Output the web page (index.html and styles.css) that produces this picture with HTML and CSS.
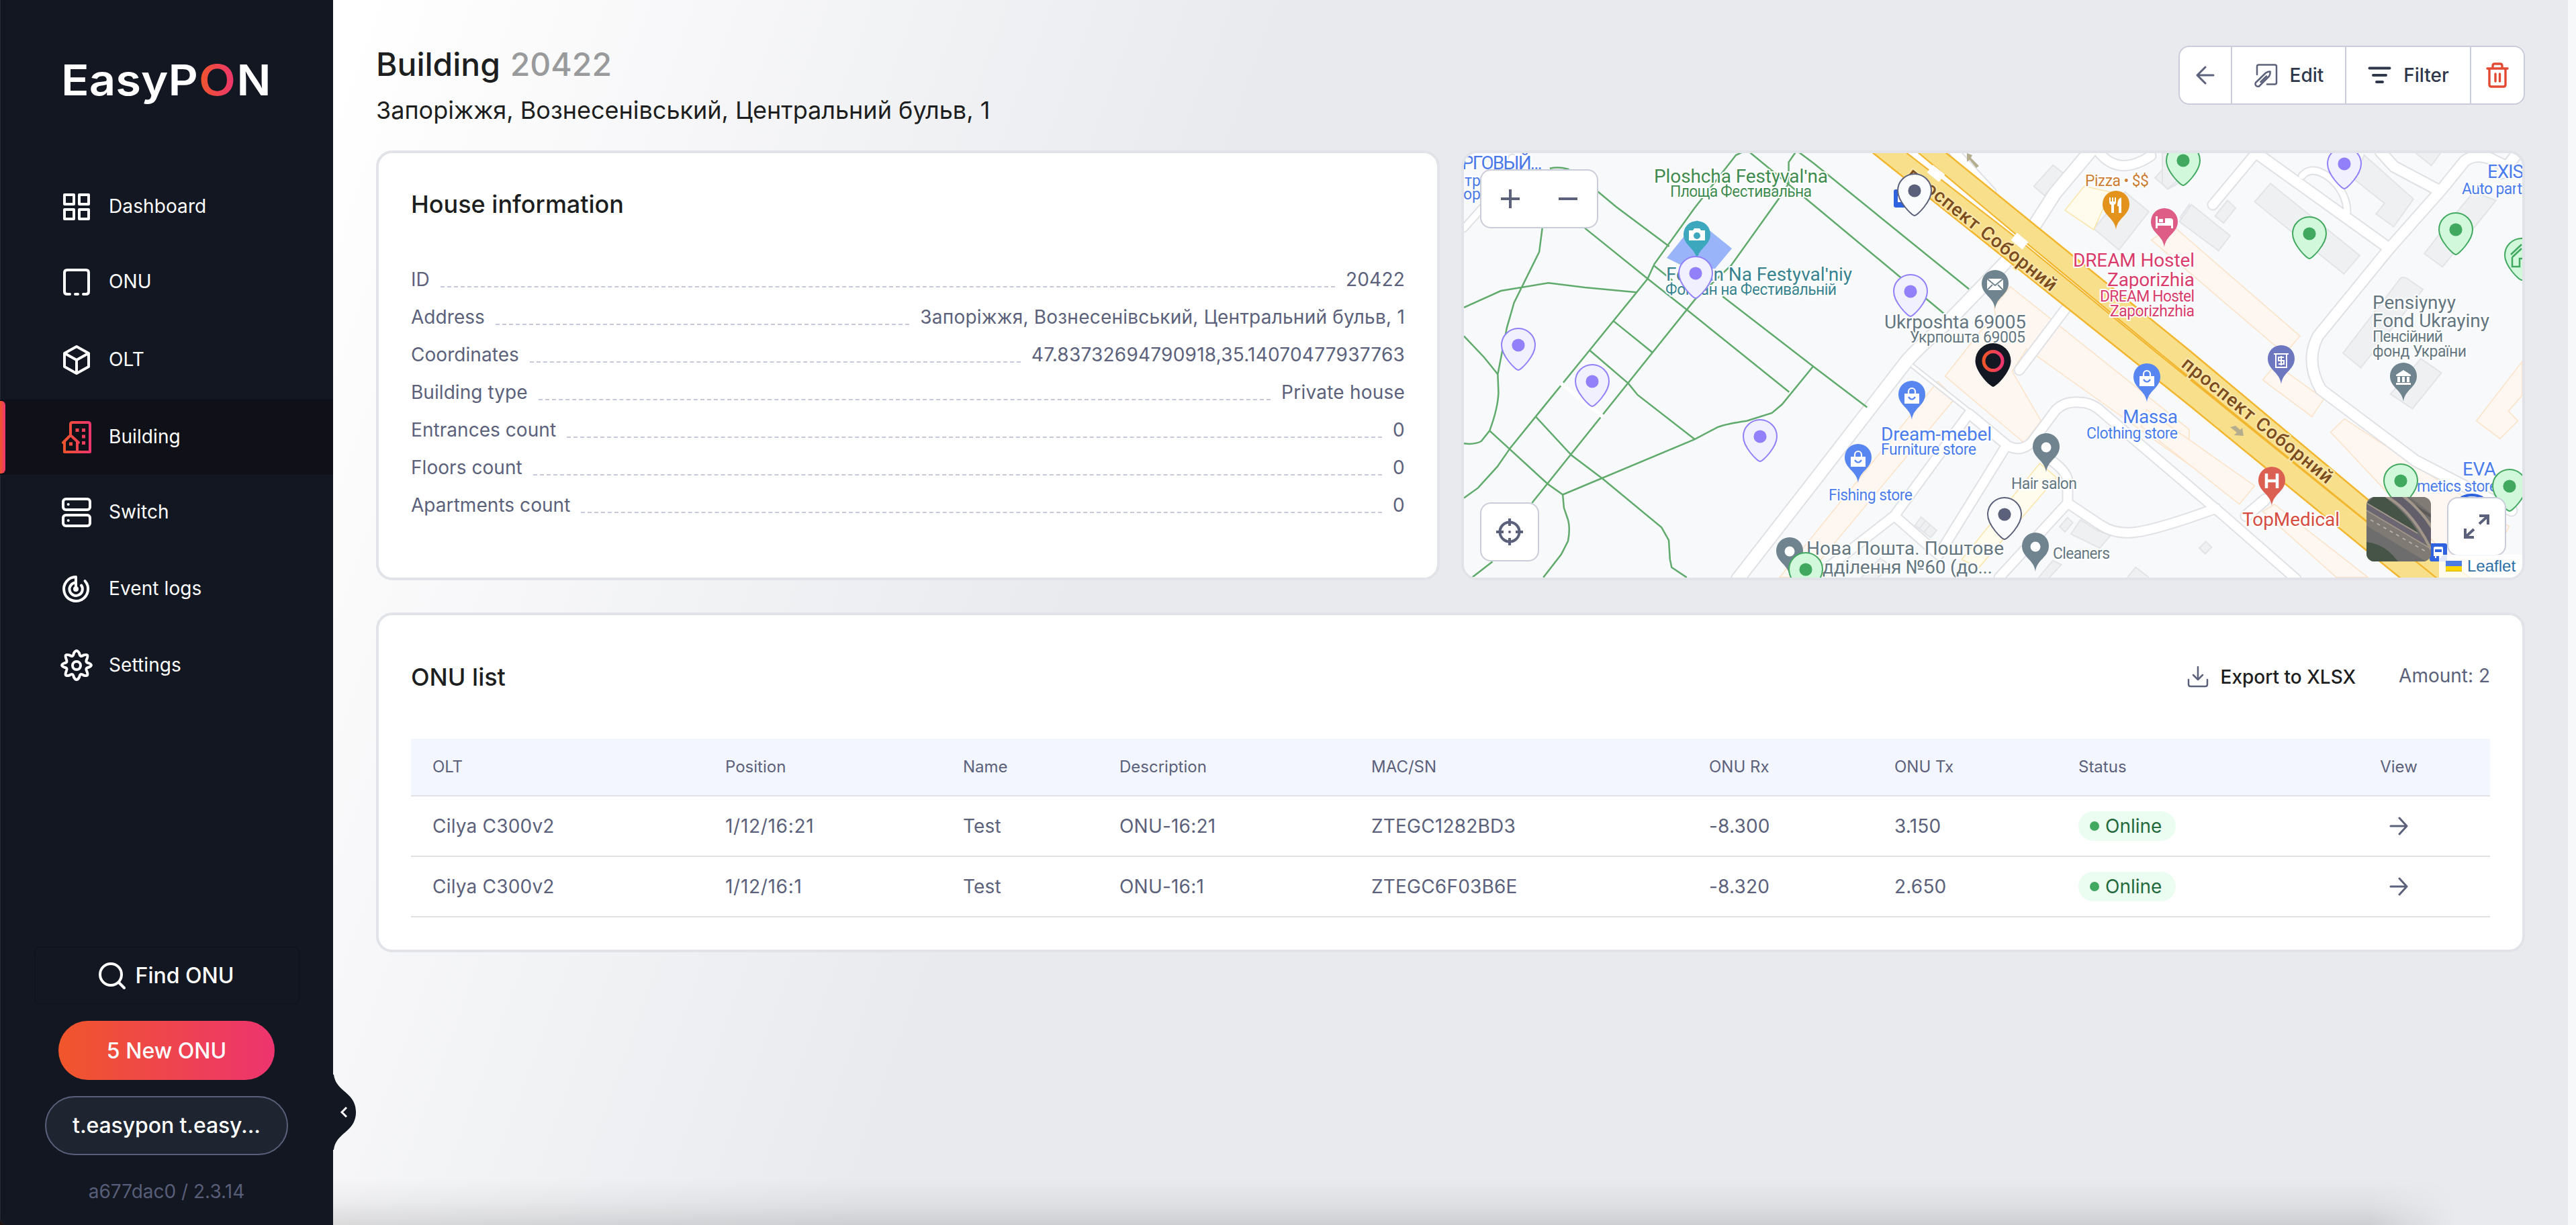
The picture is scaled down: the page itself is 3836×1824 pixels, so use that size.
FILE: index.html
```html
<!DOCTYPE html>
<html lang="en">
<head>
<meta charset="utf-8">
<title>EasyPON – Building 20422</title>
<link rel="stylesheet" href="styles.css">
</head>
<body>
<svg class="defs" width="0" height="0" aria-hidden="true">
  <defs>
    <linearGradient id="brand" x1="0" x2="1" y1="0" y2="0"><stop offset="0" stop-color="#f0562b"/><stop offset="1" stop-color="#ed346f"/></linearGradient>
    <linearGradient id="brandIcon" gradientUnits="userSpaceOnUse" x1="0" x2="44" y1="0" y2="0"><stop offset="0" stop-color="#f0562b"/><stop offset="1" stop-color="#ed346f"/></linearGradient>
    <symbol id="arrow-right" viewBox="0 0 28 28"><path d="M2 14H26M15 2l11 12-11 12" fill="none" stroke="currentColor" stroke-width="3" stroke-linecap="round" stroke-linejoin="round"/></symbol>
    <symbol id="pin" viewBox="-28 -65 56 67" overflow="visible"><path d="M0 0C-4 0-25-21-25-37A25 25 0 0 1 25-37C25-21 4 0 0 0z"/><circle class="dot" cy="-37" r="9.6"/></symbol>
  </defs>
</svg>
<div class="app">
  <aside class="sidebar">
    <svg class="logo" width="310" height="80" viewBox="92 84 310 80">
      <text x="91" y="142" textLength="204" lengthAdjust="spacingAndGlyphs">EasyP</text>
      <text x="296" y="142" textLength="55" lengthAdjust="spacingAndGlyphs" fill="url(#brand)">O</text>
      <text x="352.500" y="142" textLength="51" lengthAdjust="spacingAndGlyphs">N</text>
    </svg>
    <nav class="nav">
      <a class="nav-item"><svg width="48" height="48" viewBox="0 0 48 48"><g fill="none" stroke="#fff" stroke-width="4" stroke-linejoin="round"><path d="M6 6h14v14H6zM28 6h14v14H28zM6 28h14v14H6zM28 28h14v14H28z"/></g></svg><span>Dashboard</span></a>
      <a class="nav-item"><svg width="48" height="48" viewBox="0 0 48 48"><path d="M14 42h-4q-4 0-4-4V10q0-4 4-4h28q4 0 4 4v28q0 4-4 4h-4M22 42h4" fill="none" stroke="#fff" stroke-width="4" stroke-linecap="round"/></svg><span>ONU</span></a>
      <a class="nav-item tall"><svg width="48" height="48" viewBox="0 0 48 48"><path d="M24 4l18 10v20L24 44 6 34V14zM7 14.500L24 24l17-9.500M24 24v19" fill="none" stroke="#fff" stroke-width="4" stroke-linejoin="round"/></svg><span>OLT</span></a>
      <a class="nav-item active"><svg width="48" height="48" viewBox="0 0 48 48"><g transform="translate(2 0)"><path d="M13 19V5q0-3 3-3h23q3 0 3 3v41H4V31M2 32L13 21l12 11M23 31v14" fill="none" stroke="url(#brandIcon)" stroke-width="4" stroke-linejoin="round" stroke-linecap="round"/><path d="M20.500 11h5v5h-5zM30 11h5v5h-5zM30 20.500h5v5h-5zM30 30h5v5h-5zM11 31.500h5v5h-5z" fill="url(#brandIcon)"/></g></svg><span>Building</span></a>
      <a class="nav-item"><svg width="48" height="48" viewBox="0 0 48 48"><g fill="none" stroke="#fff" stroke-width="4"><rect x="4" y="4" width="40" height="16" rx="4"/><rect x="4" y="28" width="40" height="16" rx="4"/></g><circle cx="11.700" cy="12" r="2" fill="#fff"/><circle cx="11.700" cy="36" r="2" fill="#fff"/></svg><span>Switch</span></a>
      <a class="nav-item mid"><svg width="48" height="48" viewBox="0 0 48 48"><g fill="none" stroke="#fff" stroke-width="4" stroke-linecap="round" stroke-linejoin="round"><path d="M23 24V6A18 18 0 1 0 36.500 12M23 14.500a9.700 9.700 0 1 0 8 4"/></g><circle cx="23" cy="24" r="4" fill="#fff"/></svg><span>Event logs</span></a>
      <a class="nav-item"><svg width="48" height="48" viewBox="0 0 48 48"><g fill="none" stroke="#fff" stroke-width="4" stroke-linejoin="round"><path d="M20 5.500q4-7 8 0c1 5 3 5.500 6.500 3 6-1.500 7 0 5 5.500-2 4-1.500 5.500 3 6.500 4.500 2 4.500 4 0 6-4.500 1-5 2.500-3 6.500 2 5.500 1 7-5 5.500-3.500-2.500-5.500-2-6.500 3q-4 7-8 0c-1-5-3-5.500-6.500-3-6 1.500-7 0-5-5.500 2-4 1.500-5.500-3-6.500-4.500-2-4.500-4 0-6 4.500-1 5-2.500 3-6.500-2-5.500-1-7 5-5.500C17 11 19 10.500 20 5.500z"/><circle cx="24" cy="24" r="6"/></g></svg><span>Settings</span></a>
    </nav>
    <div class="side-foot">
      <div class="find"><svg width="44" height="44" viewBox="0 0 44 44"><g fill="none" stroke="#fff" stroke-width="4" stroke-linecap="round"><circle cx="20" cy="20" r="16"/><path d="M32 32l8 8"/></g></svg>Find ONU</div>
      <div class="new-onu">5 New ONU</div>
      <div class="user">t.easypon t.easy...</div>
      <div class="version">a677dac0 / 2.3.14</div>
    </div>
    <svg class="toggle" width="36" height="112" viewBox="0 0 36 112"><path d="M0 0H2C5 26 35 26 35 56S5 86 2 112H0z" fill="#131722"/><path d="M21 49l-7 7 7 7" fill="none" stroke="#fff" stroke-width="3"/></svg>
  </aside>

  <main class="main">
    <header class="head">
      <div>
        <h1>Building <span>20422</span></h1>
        <p class="sub">Запоріжжя, Вознесенівський, Центральний бульв, 1</p>
      </div>
      <div class="actions">
        <button class="btn back"><svg width="28" height="28" viewBox="0 0 28 28"><path d="M26 14H2M14 2L2 14l12 12" fill="none" stroke="#5b617a" stroke-width="3" stroke-linecap="round" stroke-linejoin="round"/></svg></button>
        <button class="btn edit"><svg width="36" height="36" viewBox="0 0 36 36"><g fill="none" stroke="#5b617a" stroke-width="2.500" stroke-linecap="round" stroke-linejoin="round"><path d="M5 17V5q0-2.500 2.500-2.500h24Q34 2.500 34 5v24q0 2.500-2.500 2.500H20"/><path d="M18 14.500q4-2.500 6.500-2 .5 4-1.500 7L8 34.500q-3 1-5-1.500-1-2 0-4z M19 19.500l-8.500 8.500"/></g></svg>Edit</button>
        <button class="btn filter"><svg width="36" height="36" viewBox="0 0 36 36"><path d="M3.500 7.500h30M9 18h19M14 28h9" fill="none" stroke="#2f374b" stroke-width="4" stroke-linecap="round"/></svg>Filter</button>
        <button class="btn del"><svg width="36" height="40" viewBox="0 0 36 40"><g fill="none" stroke="#e34a33" stroke-width="3.400" stroke-linecap="round" stroke-linejoin="round"><path d="M3 10h30M11 9V6q0-3 3-3h8q3 0 3 3v3M6 10v24q0 3 3 3h18q3 0 3-3V10M15 18v11M21.500 18v11"/></g></svg></button>
      </div>
    </header>

    <div class="cards">
      <section class="card info">
        <h2>House information</h2>
        <dl>
          <div><dt>ID</dt><i></i><dd>20422</dd></div>
          <div><dt>Address</dt><i></i><dd>Запоріжжя, Вознесенівський, Центральний бульв, 1</dd></div>
          <div><dt>Coordinates</dt><i></i><dd>47.83732694790918,35.14070477937763</dd></div>
          <div><dt>Building type</dt><i></i><dd>Private house</dd></div>
          <div><dt>Entrances count</dt><i></i><dd>0</dd></div>
          <div><dt>Floors count</dt><i></i><dd>0</dd></div>
          <div><dt>Apartments count</dt><i></i><dd>0</dd></div>
        </dl>
      </section>

      <section class="card map">
        <svg class="canvas" width="1576" height="632" viewBox="2180 228 1576 632">
          <rect x="2180" y="228" width="1576" height="632" fill="#f7f9fb"/>
          <!-- building footprints -->
          <g transform="translate(2700 210) scale(.35714 .42088)" class="grey">
            <path d="M920 160l80-75 45 30-80 78zM1170 310l130-130 100 70-125 135zM1425 130l55-50 88 40-55 35-33 15zM425 1360l25-30 65 48-25 25zM442 1372l25-27M462 1385l25-27M1028 1365l32-33 23 18-33 33zM1075 1390l40-50 70 38 55 17-45 45zM1310 1544l35-36 55 36M1530 270l38-45v75zM200 1544l80-68 50 30-60 38M940 1544l60-60 35 15-50 45"/>
          </g>
          <g transform="translate(3220 210) scale(.39286 .42088)" class="grey">
            <path d="M350 215l60-65 338 255-60 65zM65 285l45-60 147 110-44 53zM200 265l47-55 31 27-46 53zM735 120l30-70 187 155-75 98-67-45 32-38-142-105zM993 398l107-128 80-90 85 30-203 235zM685 750L895 495q10-18 30-10l63 40-236 277zM865 895l115-125 78 50-110 127zM140 1440l25-23 22 20-25 23zM960 42l60 45 35-45M0 150l20 20 50-40 20-88H0z"/>
          </g>
          <g transform="translate(2700 210) scale(.35714 .42088)" class="peach">
            <path d="M550 832l155-167 55-45-5-35 67-70 746 505v125L890 735l-60 80 120 175-70 78zM-80 1480L520 850l72 60L-30 1544h-110z"/>
            <path class="yel" d="M1050 245l80-85 110 20-70 134zM945 1140l70 50-325 320-70-30z"/>
          </g>
          <g transform="translate(3220 210) scale(.39286 .42088)" class="peach">
            <path d="M-42 350L40 300l482 390-42 45-20 15zM380 845l50-55 182 122-45 63zM638 1030l52-47 625 380-100 181h-60zM-80 1010l20-60 410 270-58 65zM380 1310l45-25 355 259H660zM1190 990l174-210v120l-52 55 36 35-68 63z"/>
          </g>
          <path d="M2527 328l52 42-25 30-40 0-32-16z" fill="#99b4f8"/>
          <!-- streets: wide casing first, then the same lines narrower in white -->
          <g class="streets">
            <g id="streets">
              <path class="w18" d="M2588 862L2700 718 2839 538Q2860 514 2900 480L2985 392 3028 338 3060 288 3112 226"/>
              <path class="w13" d="M3007 551l68-90M2821 768L2932 616l58 48q20 10 36-6l35-47q14-14 35-12 20 0 36 16L3220 690l94 80 105 92M2700 862l121-94 66 58 98-158M3079 749l48 32q20 14 48 12 25-2 85-22l40-14M3079 749l-102 111M3079 749v-32q0-14-25-32M3125 226q30 38 78 6M3295 305l60-72M2910 226l55 60"/>
              <path class="w5" d="M2848 545l82 65"/>
              <path class="w14" d="M3360 228L3558 370M3558 370L3452 500Q3432 538 3456 580L3597 686 3740 760M3558 370l78-88 34-42q16-12 38-4l40 20M3545 226l20 22 64 34M3725 258l32-40M3345 768l28-24"/>
              <path class="w9" d="M3428 262q15-18 43 4 24 22 24 50M2180 340l40-45 32-60"/>
            </g>
            <use href="#streets" class="surface"/>
          </g>
          <!-- avenue -->
          <path d="M2787 226L3260 603.500 3576 862H3680L3524.500 742.400 3260 521.500 2896 226z" fill="#f8df8c" stroke="#f2b62e" stroke-width="2.500"/>
          <path d="M2837 226L3005 356 3220 532 3630 862 3220 529 3008 354 2855 226z" fill="#fff" stroke="#f2b62e" stroke-width="2.200"/>
          <path d="M2875 252l16 13M2999 352l17 14M2874 251l18 14" stroke="#fff" stroke-width="14"/>
          <!-- park paths -->
          <g transform="translate(2160 210) scale(.35714 .42088)" class="paths">
            <path d="M56 589L210 530 408 502 560 518 776 535M384 300L370 392 265 572 235 660 197 825 200 890Q198 945 163 1025L128 1062Q100 1075 56 1070M56 690L140 765 197 825M163 1025L405 1213 468 1251 1018 1055 1115 1012Q1150 1000 1235 990L1340 962 1382 932 1512 797M468 1251L473 1298 490 1340Q500 1370 490 1415L462 1462 387 1544M56 1263L115 1227 195 1152 250 1085 355 975 580 740 822 487 850 435 1015 240 1190 50 1215 40M1245 38L1512 225 2057 610M1450 38L1512 77 2162 524M1440 38L1410 75V150L1368 205 1170 440 1020 560 340 1280M355 975L505 1112 635 1195 880 1367 910 1412 915 1480 922 1508 985 1544M680 637L845 750M580 740L742 858 780 898 1018 1055M560 308L822 487 990 600 1412 888M414 97Q450 90 490 99L612 177 690 232 912 373M850 442L925 493M1135 550L1512 797 1737 942M90 1544L175 1488"/>
            <path d="M460 857L635 975" class="bench"/>
          </g>
          <!-- street names -->
          <g class="ave">
            <text transform="translate(2838 263) rotate(38.500)" textLength="276">проспект Соборний</text>
            <text transform="translate(3247 545) rotate(39)" textLength="280">проспект Соборний</text>
          </g>
          <path d="M2929 228l8 3-2 4 12 12-4 3-10-12-4 3zM3321 636l8-2 7 6 3-3 2 12-14-1 4-4z" fill="#b4ad8e"/>
          <!-- transit stops -->
          <g><rect x="2820" y="282" width="27" height="27" rx="3" fill="#2f62de"/><rect x="3618" y="809" width="26" height="27" rx="3" fill="#2f62de"/><path d="M3624 816q0-2 2-2h10q2 0 2 2v12h-3v3h-2v-3h-5v3h-2v-3h-2zM2826 289h10v12h-10z" fill="#fff"/><path d="M3626 818h10v4h-10z" fill="#2f62de"/><path d="M3665 741q16-8 32 0" stroke="#2f62de" stroke-width="4" fill="none"/></g>
          <!-- places -->
          <g class="pl">
            <g fill="#4b7ae8"><text x="2177" y="252" textLength="120" class="big">РГОВЫЙ...</text><text x="2181" y="277">тра</text><text x="2179" y="297">opin</text></g>
            <g fill="#3f8b50"><text x="2463" y="272" class="big" textLength="259">Ploshcha Festyvalʹna</text><text x="2487" y="293" textLength="211">Площа Фестивальна</text></g>
            <g fill="#38838f"><text x="2481" y="418" class="big" textLength="277">Fontan Na Festyvalʹniy</text><text x="2480" y="439" textLength="255">Фонтан на Фестивальній</text></g>
            <g fill="#647680"><text x="2806" y="489" class="big" textLength="211">Ukrposhta 69005</text><text x="2844" y="510" textLength="172">Укрпошта 69005</text>
              <text x="2995" y="728" textLength="98">Hair salon</text><text x="3057" y="832" textLength="85">Cleaners</text>
              <text x="2690" y="826" class="big" textLength="294">Нова Пошта. Поштове</text><text x="2714" y="854" class="big" textLength="253">дділення №60 (до...</text>
              <text x="3533" y="460" class="big" textLength="124">Pensiynyy</text><text x="3533" y="487" class="big" textLength="174">Fond Ukrayiny</text><text x="3533" y="509" textLength="105">Пенсійний</text><text x="3533" y="531" textLength="140">фонд України</text></g>
            <g fill="#4a7cec"><text x="2801" y="656" class="big" textLength="165">Dream-mebel</text><text x="2801" y="677" textLength="142">Furniture store</text><text x="2723" y="745" textLength="125">Fishing store</text>
              <text x="3161" y="630" class="big" textLength="82">Massa</text><text x="3107" y="653" textLength="136">Clothing store</text>
              <text x="3704" y="265" class="big" textLength="54">EXIS</text><text x="3666" y="289" textLength="90">Auto part</text><text x="3667" y="708" class="big" textLength="50">EVA</text><text x="3599" y="732" textLength="120">metics store</text></g>
            <text x="3105" y="277" textLength="95" fill="#cc7d33">Pizza • $$</text>
            <g fill="#d83b6c"><text x="3087" y="397" class="big" textLength="181">DREAM Hostel</text><text x="3138" y="426" class="big" textLength="130">Zaporizhia</text><text x="3127" y="449" textLength="141">DREAM Hostel</text><text x="3142" y="471" textLength="126">Zaporizhzhia</text></g>
            <text x="3339" y="783" class="big" textLength="145" fill="#d54c40">TopMedical</text>
          </g>
          <g class="gp">
            <g transform="translate(2527 387)" fill="#3da7bd"><path d="M0 0C-2-18-20-21-20-38A20 20 0 0 1 20-38C20-21 2-18 0 0z"/><path d="M-12-44h6l2-3h8l2 3h6v15h-24z" fill="#fff"/><circle cy="-36" r="5" /></g>
            <g transform="translate(2971 460)" fill="#70848f"><path d="M0 0C-2-18-20-21-20-38A20 20 0 0 1 20-38C20-21 2-18 0 0z"/><path d="M-12-45h24v17h-24z" fill="#fff"/><path d="M-12-45L0-35l12-10M-12-28l8-8M12-28l-8-8" fill="none" stroke="#70848f" stroke-width="2"/></g>
            <g id="shop" transform="translate(2847 625)" fill="#5886f0"><path d="M0 0C-2-18-20-21-20-38A20 20 0 0 1 20-38C20-21 2-18 0 0z"/><path d="M-11-39h22v15h-22z" fill="#fff"/><path d="M-5-39v-3a5 5 0 0 1 10 0v3" fill="none" stroke="#fff" stroke-width="2.200"/><path d="M-5-34q5 7 10 0" fill="none" stroke="#5886f0" stroke-width="2.200"/></g>
            <use href="#shop" x="-80" y="94"/><use href="#shop" x="350" y="-26"/>
            <g id="plain" transform="translate(3047 703)" fill="#70848f"><path d="M0 0C-2-18-20-21-20-38A20 20 0 0 1 20-38C20-21 2-18 0 0z"/><circle cy="-37" r="7.500" fill="#fff"/></g>
            <use href="#plain" x="-16" y="148"/><use href="#plain" x="-382" y="155"/>
            <g transform="translate(3151 342)" fill="#e3921c"><path d="M0 0C-2-18-20-21-20-38A20 20 0 0 1 20-38C20-21 2-18 0 0z"/><path d="M-10-48v7q0 3 3 4v12h4v-12q3-1 3-4v-7h-2v6h-2v-6h-2v6h-2v-6zM8-48v23H4v-10H2q0-12 6-13z" fill="#fff"/></g>
            <g transform="translate(3223 368)" fill="#de5d86"><path d="M0 0C-2-18-20-21-20-38A20 20 0 0 1 20-38C20-21 2-18 0 0z"/><path d="M-13-46h3v10H1v-7h8q4 0 4 4v11h-3v-4h-20v4h-3zM-8-42h6v5h-6z" fill="#fff"/></g>
            <g transform="translate(3397 572)" fill="#6c77bf"><path d="M0 0C-2-18-20-21-20-38A20 20 0 0 1 20-38C20-21 2-18 0 0z"/><path d="M-11-45h22M-8-45v20H8v-20M4-40h-8v5h8v5h-8M0-42v14" fill="none" stroke="#fff" stroke-width="2"/></g>
            <g transform="translate(3579 598)" fill="#70848f"><path d="M0 0C-2-18-20-21-20-38A20 20 0 0 1 20-38C20-21 2-18 0 0z"/><path d="M-11-40L0-47l11 7v2h-22zM-9-37h4v8h-4zM-2-37h4v8h-4zM5-37h4v8H5zM-11-28h22v3h-22z" fill="#fff"/></g>
            <g transform="translate(3383 753)" fill="#dc6051"><path d="M0 0C-2-18-20-21-20-38A20 20 0 0 1 20-38C20-21 2-18 0 0z"/><path d="M-8-48v22M8-48v22M-8-37H8" fill="none" stroke="#fff" stroke-width="4.500"/></g>
          </g>
          <!-- building markers -->
          <g class="pin violet"><use href="#pin" x="2233" y="486" width="56" height="67"/><use href="#pin" x="2343" y="540" width="56" height="67"/><use href="#pin" x="2497" y="379" width="56" height="67"/><use href="#pin" x="2593" y="622" width="56" height="67"/><use href="#pin" x="2817" y="406" width="56" height="67"/><use href="#pin" x="3463" y="216" width="56" height="67"/></g>
          <g class="pin green"><use href="#pin" x="2661" y="820" width="56" height="67"/><use href="#pin" x="3223" y="211" width="56" height="67"/><use href="#pin" x="3411" y="320" width="56" height="67"/><use href="#pin" x="3629" y="314" width="56" height="67"/><use href="#pin" x="3547" y="688" width="56" height="67"/><use href="#pin" x="3709" y="696" width="56" height="67"/>
            <g transform="translate(3755 417)"><path d="M0 0C-4 0-25-21-25-37A25 25 0 0 1 25-37C25-21 4 0 0 0z"/><path d="M-16-38L0-53M-14-34L0-47M-14-34v14h11v-12h8" fill="none" stroke-width="2.500"/></g></g>
          <g class="pin white"><use href="#pin" x="2823" y="256" width="56" height="67"/><use href="#pin" x="2957" y="738" width="56" height="67"/></g>
          <g transform="translate(2968 576)"><path d="M0 0C-4 0-26.500-22-26.500-38.500A26.500 26.500 0 0 1 26.500-38.500C26.500-22 4 0 0 0z" fill="#131722"/><circle cy="-38.500" r="14" fill="none" stroke="url(#brand)" stroke-width="5"/></g>
        </svg>
        <div class="ctl zoom"><svg width="172" height="84" viewBox="0 0 172 84"><path d="M29 42h28M43 28v28M115 42h28" stroke="#5b617a" stroke-width="4"/></svg></div>
        <div class="ctl locate"><svg width="84" height="84" viewBox="0 0 84 84"><g fill="none" stroke="#5b617a" stroke-width="4"><circle cx="42" cy="42" r="14.500"/><path d="M42 22v11M42 51v11M22 42h11M51 42h11"/></g><circle cx="42" cy="42" r="2" fill="#5b617a"/></svg></div>
        <div class="layer"><svg width="96" height="96" viewBox="0 0 96 96"><rect width="96" height="96" fill="#706e6c"/><path d="M0 20L96 76V98H90L0 43z" fill="#7f7a74"/><path d="M0 43L92 98H0z" fill="#6d6d6d"/><path d="M62-2L98 26V-2z" fill="#807b75"/><path d="M58 4L98 30" stroke="#5c5959" stroke-width="4"/><path d="M0 10L10 0H27Q58 22 77 53L20 20z" fill="#465347"/><path d="M0 67Q28 70 47 96H0z" fill="#465347"/><path d="M40-2Q74 20 98 68" fill="none" stroke="#625e6a" stroke-width="15"/><path d="M0 14L86 66" stroke="#6b6672" stroke-width="7"/><path d="M0 9L76 54M0 20L94 76" stroke="#a2968b" stroke-width="1.800"/><path d="M28-2Q68 20 96 78M54-2Q80 18 98 46" fill="none" stroke="#a2968b" stroke-width="4"/><path d="M6 34L90 82" stroke="#b9b1a7" stroke-width="1.800" stroke-dasharray="5 6"/></svg></div>
        <div class="ctl full"><svg width="84" height="84" viewBox="0 0 84 84"><path d="M46 38L58 27M46 26h13v13M38 46L26 57M25 45v13h13" fill="none" stroke="#5b617a" stroke-width="4"/></svg></div>
        <div class="attr"><svg width="24" height="16" viewBox="0 0 24 16"><path d="M0 0h24v8H0z" fill="#4c7be1"/><path d="M0 8h24v8H0z" fill="#ffd500"/><path d="M0 14.500h24V16H0z" fill="#e0bc00"/></svg>Leaflet</div>
      </section>
    </div>

    <section class="card list">
      <div class="list-head">
        <h2>ONU list</h2>
        <div class="export"><svg width="32" height="32" viewBox="0 0 32 32"><path d="M2 20v7q0 3 3 3h22q3 0 3-3v-7M16 1v19M9 13l7 7 7-7" fill="none" stroke="#5b617a" stroke-width="2.500" stroke-linecap="round" stroke-linejoin="round"/></svg>Export to XLSX</div>
        <div class="amount">Amount: 2</div>
      </div>
      <div class="table">
        <div class="tr th"><span>OLT</span><span>Position</span><span>Name</span><span>Description</span><span>MAC/SN</span><span>ONU Rx</span><span>ONU Tx</span><span>Status</span><span>View</span></div>
        <div class="tr"><span>Cilya C300v2</span><span class="pos">1/12/16:21</span><span>Test</span><span>ONU-16:21</span><span>ZTEGC1282BD3</span><span>-8.300</span><span>3.150</span><span><b class="pill">Online</b></span><span><svg width="28" height="28"><use href="#arrow-right"/></svg></span></div>
        <div class="tr"><span>Cilya C300v2</span><span class="pos">1/12/16:1</span><span>Test</span><span>ONU-16:1</span><span>ZTEGC6F03B6E</span><span>-8.320</span><span>2.650</span><span><b class="pill">Online</b></span><span><svg width="28" height="28"><use href="#arrow-right"/></svg></span></div>
      </div>
    </section>
  </main>
  <div class="scrollbar"></div>
</div>
</body>
</html>
```
FILE: styles.css
```css
* { box-sizing: border-box; }
html, body { margin: 0; height: 100%; }
body { font-family: Inter, "Liberation Sans", sans-serif; font-size: 28px; color: #1d1e20; overflow: hidden; }
h1, h2, p, dl, dd { margin: 0; }
svg { display: block; flex: none; }
.defs { position: absolute; }

.app { display: flex; height: 1824px; background: #1d140f; }

/* sidebar */
.sidebar { position: relative; flex: none; width: 496px; height: 1824px; display: flex; flex-direction: column; background: #131722; color: #fff; box-shadow: inset 1px 0 #272b35; border-radius: 0 0 0 10px; }
.logo { margin: 84px 0 0 92px; font-size: 63px; font-weight: 600; fill: #fff; overflow: visible; }
.nav { margin-top: 88px; }
.nav-item { display: flex; align-items: center; gap: 24px; height: 112px; padding-left: 90px; letter-spacing: .1px; }
.nav-item span { padding-bottom: 2px; }
.nav-item.tall { height: 119px; }
.nav-item.mid { height: 116px; }
.nav-item.active { position: relative; background: #101018; }
.nav-item.active::before { content: ""; position: absolute; left: 0; top: 2px; width: 8px; height: 108px; border-radius: 0 6px 6px 0; background: linear-gradient(90deg, #f0562b, #ed346f); }
.side-foot { margin-top: auto; display: flex; flex-direction: column; align-items: center; gap: 24px; height: 415px; font-size: 32px; font-weight: 500; }
.find { display: flex; align-items: center; justify-content: center; gap: 13px; width: 395px; height: 87px; padding-right: 3px; border: 2px solid #11141e; border-radius: 8px; }
.new-onu { width: 322px; height: 88px; border-radius: 44px; line-height: 89px; text-align: center; background: linear-gradient(90deg, #f0562b, #ed346f); }
.user { width: 362px; height: 88px; border: 2px solid #5b617a; border-radius: 44px; line-height: 84px; text-align: center; letter-spacing: -.1px; background: #1e2531; }
.version { margin-top: 12px; font-size: 28px; font-weight: 400; line-height: 36px; color: #585e77; }
.toggle { position: absolute; left: 495px; top: 1600px; z-index: 2; }

/* page */
.main { position: relative; flex: none; width: 3328px; padding: 68px 64px 0; display: flex; flex-direction: column; background: linear-gradient(110deg, #fff 1%, #e9eaee 36%); }
.main::after { content: ""; position: absolute; left: 0; width: 3160px; bottom: 0; height: 70px; background: linear-gradient(180deg, rgba(0,0,0,0), rgba(0,0,0,.035) 50%, rgba(0,0,0,.115)); mask-image: linear-gradient(90deg, #000 96%, transparent); }
.scrollbar { flex: 1; background: #f7f8fa; }
.head { display: flex; justify-content: space-between; height: 156px; }
h1 { font-size: 48px; font-weight: 500; line-height: 56px; }
h1 span { color: #999a9c; margin-left: 2px; }
.sub { margin-top: 18px; font-size: 36px; line-height: 44px; }
.actions { display: flex; height: 88px; border: 2px solid #c9cdd9; border-radius: 16px; background: #fff; overflow: hidden; }
.btn { display: flex; align-items: center; justify-content: center; gap: 18px; padding: 0; border: 0; border-right: 2px solid #c9cdd9; background: none; font: 500 28px Inter, sans-serif; color: #2f374b; }
.back { width: 78px; }
.edit { width: 170px; }
.filter { width: 186px; }
.del { width: 78px; border: 0; }

.cards { display: grid; grid-template-columns: 1584px 1584px; gap: 32px; height: 640px; }
.card { border: 4px solid #e2e3e9; border-radius: 24px; background: #fff; }
h2 { font-size: 36px; font-weight: 500; line-height: 44px; }
.info { padding: 54px 48px; }
dl { margin-top: 62px; color: #5b617a; }
dl div { display: flex; height: 56px; line-height: 56px; gap: 16px; letter-spacing: .05px; }
dl dd { letter-spacing: .22px; }
dl i { flex: 1; height: 40px; border-bottom: 2px dashed #c6cad8; }

.map { position: relative; overflow: hidden; }
.canvas { font-family: Roboto, sans-serif; }
.grey path { fill: #eff0f2; stroke: #e3e4e8; stroke-width: 2; vector-effect: non-scaling-stroke; }
.peach path { fill: #fef6f0; stroke: #fce2c6; stroke-width: 1.500px; vector-effect: non-scaling-stroke; }
.peach .yel { fill: #fffcee; stroke: #fbe4a8; }
.streets { --surface: #dfe1e5; --edge: 0px; }
.surface { --surface: #fff; --edge: 4px; }
.streets path { fill: none; stroke: var(--surface); stroke-width: calc(var(--w) - var(--edge)); stroke-linejoin: round; stroke-linecap: round; }
.w18 { --w: 22px; } .w14 { --w: 19px; } .w13 { --w: 17px; } .w9 { --w: 13px; } .w5 { --w: 8px; }
.paths path { fill: none; stroke: #60aa6c; stroke-width: 2.500px; vector-effect: non-scaling-stroke; }
.paths .bench { stroke: #fff; stroke-width: 6px; }
.ave text { font-size: 28px; font-weight: 500; fill: #7a4c20; stroke: #fbe7a8; stroke-width: 4px; paint-order: stroke; }
.pl text { font-size: 23px; stroke: #fff; stroke-width: 4px; paint-order: stroke; stroke-linejoin: round; }
.pl .big { font-size: 28px; }
.pin { stroke-width: 2px; }
.violet { fill: #f1f0ff; stroke: #9180fa; --dot: #9180fa; }
.green { fill: #d2f8dc; stroke: #41a85f; --dot: #41a85f; }
.white { fill: #fafbfd; stroke: #5b617a; --dot: #5b617a; }
.dot { fill: var(--dot); stroke: none; }
.ctl { position: absolute; border: 2px solid #c9cdd9; border-radius: 16px; background: #fff; width: 88px; height: 88px; }
.zoom { left: 24px; top: 24px; width: 176px; }
.locate { left: 24px; top: 520px; }
.full { left: 1464px; top: 512px; }
.layer { position: absolute; left: 1344px; top: 512px; width: 96px; height: 96px; border-radius: 12px; overflow: hidden; }
.attr { position: absolute; right: 0; bottom: 0; display: flex; align-items: center; gap: 8px; width: 124px; height: 34px; padding-left: 10px; background: rgba(255,255,255,.85); font: 24px "Liberation Sans", sans-serif; color: #2b6ea6; }

.list { margin-top: 48px; height: 506px; padding: 70px 48px 0; }
.list-head { display: flex; align-items: center; height: 44px; }
.export { display: flex; align-items: center; gap: 18px; margin-left: auto; font-weight: 500; }
.amount { margin: -4px 0 0 64px; color: #5b617a; }
.table { margin-top: 70px; color: #5b617a; }
.tr { display: grid; grid-template-columns: 436px 354px 233px 375px 503px 276px 274px 373px 272px; align-items: center; height: 90px; border-bottom: 2px solid #e1e2e8; letter-spacing: .2px; }
.tr .pos { letter-spacing: .7px; }
.tr span { padding-left: 32px; }
.tr span:last-child { padding: 0; display: flex; justify-content: center; }
.tr.th { height: 86px; padding-bottom: 2px; background: #f4f6ff; font-size: 24px; letter-spacing: 0; }
.pill { display: flex; align-items: center; gap: 9px; width: 145px; height: 44px; padding-left: 17px; border-radius: 22px; background: #ebfcf1; color: #22693b; font-weight: 400; letter-spacing: 0; }
.pill::before { content: ""; width: 14px; height: 14px; border-radius: 50%; background: #41a85f; }
```
